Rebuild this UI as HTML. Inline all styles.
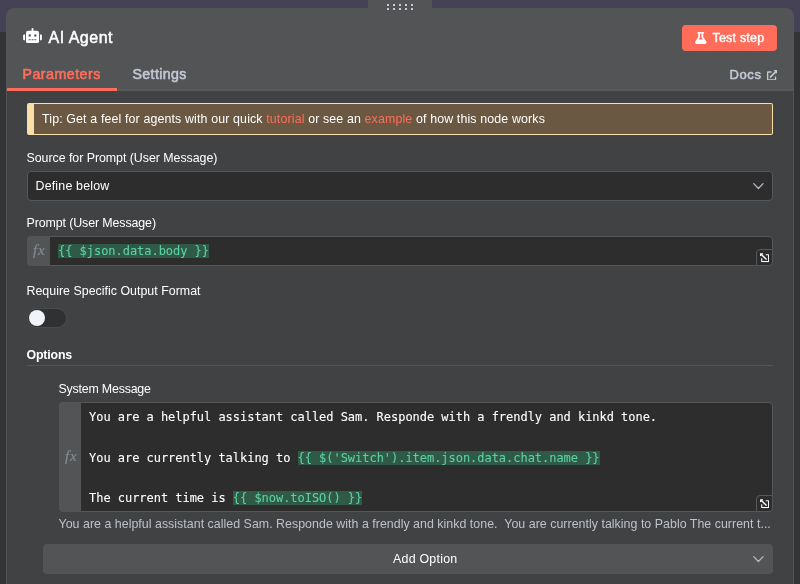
<!DOCTYPE html>
<html lang="en">
<head>
<meta charset="utf-8">
<title>AI Agent</title>
<style>
html,body{margin:0;padding:0;}
body{width:800px;height:584px;overflow:hidden;position:relative;background:#333436;font-family:"Liberation Sans",sans-serif;color:#fff;}
.abs{position:absolute;}
.topbar{left:0;top:0;width:800px;height:32px;background:#444254;}
.handle{left:368px;top:0;width:64px;height:10px;background:#535456;}
.panel{left:6px;top:8px;width:788px;height:600px;background:#535456;border-radius:8px 8px 0 0;}
.body{left:7px;top:90.600px;width:786px;height:500px;background:#414244;}
.t{position:absolute;white-space:nowrap;line-height:1;}
.title{left:48.5px;top:30px;font-size:16px;letter-spacing:0.5px;color:#fff;-webkit-text-stroke:0.5px #fff;}
.btn{left:682px;top:25px;width:95px;height:26px;background:#ff6d5a;border-radius:4px;}
.btn .t{left:30.500px;top:7px;font-size:12.4px;letter-spacing:0.25px;color:#fff;-webkit-text-stroke:0.4px #fff;}
.tab{top:67px;font-size:14.2px;}
.tab.on{left:22.500px;color:#ff6d5a;letter-spacing:0.5px;-webkit-text-stroke:0.6px #ff6d5a;}
.tab.off{color:#c3c9d5;-webkit-text-stroke:0.55px #c3c9d5;}
.underline{left:7px;top:88.200px;width:110px;height:2.600px;background:#ff6d5a;}
.tip{left:27px;top:102.600px;width:738px;height:30.400px;background:#6a5842;border:1px solid #fbdfa9;border-left-width:7px;border-radius:2px;}
.tip .t{left:8px;top:9.400px;font-size:12.4px;letter-spacing:0.136px;color:#fff;}
.tip b{font-weight:normal;color:#ff6d5a;}
.lbl{font-size:12.4px;color:#fff;}
.input{background:#2d2d2e;border:1px solid #565759;border-radius:4px;box-sizing:border-box;}
.fx{background:#535456;border-radius:4px 0 0 4px;}
.fx .t{font-family:"Liberation Serif",serif;font-style:italic;font-size:15px;letter-spacing:0.8px;color:#868a92;-webkit-text-stroke:0.2px #868a92;}
.mono{font-family:"DejaVu Sans Mono","Liberation Mono",monospace;font-size:12px;letter-spacing:-0.034px;color:#fff;-webkit-text-stroke:0.1px;}
.ex{color:#5fd0a0;background:#2f5a48;}
.hint{font-size:12.4px;letter-spacing:0.027px;color:#bcc1cb;}
</style>
</head>
<body>
<div id="root" style="position:absolute;left:0;top:0;width:800px;height:584px;overflow:hidden;will-change:transform;">
<div class="abs topbar"></div>
<div class="abs panel"></div>
<div class="abs handle"></div>
<svg class="abs" style="left:387px;top:4px" width="30" height="6" viewBox="0 0 30 6"><g fill="#c3c9d5"><rect x="0" y="0" width="2" height="2"/><rect x="6" y="0" width="2" height="2"/><rect x="12" y="0" width="2" height="2"/><rect x="18" y="0" width="2" height="2"/><rect x="24" y="0" width="2" height="2"/><rect x="0" y="4" width="2" height="2"/><rect x="6" y="4" width="2" height="2"/><rect x="12" y="4" width="2" height="2"/><rect x="18" y="4" width="2" height="2"/><rect x="24" y="4" width="2" height="2"/></g></svg>
<div class="abs body"></div>

<!-- header -->
<svg class="abs" style="left:22.800px;top:28.400px" width="19" height="15" viewBox="0 0 640 512"><path fill="#fff" d="M32 224h32v192H32a32 32 0 0 1-32-32V256a32 32 0 0 1 32-32zm512-48v272a64 64 0 0 1-64 64H160a64 64 0 0 1-64-64V176a80 80 0 0 1 80-80h112V32a32 32 0 0 1 64 0v64h112a80 80 0 0 1 80 80zm-280 80a40 40 0 1 0-40 40 40 40 0 0 0 40-40zm-8 128h-64v32h64zm96 0h-64v32h64zm104-128a40 40 0 1 0-40 40 40 40 0 0 0 40-40zm-8 128h-64v32h64zm192-128v128a32 32 0 0 1-32 32h-32V224h32a32 32 0 0 1 32 32z"/></svg>
<div class="t title">AI Agent</div>
<div class="abs btn">
  <svg class="abs" style="left:13px;top:7px" width="11.5" height="12" viewBox="0 0 448 512" preserveAspectRatio="none"><path fill="#fff" d="M437.2 403.500L320 215V64h8c13.300 0 24-10.700 24-24V24c0-13.300-10.700-24-24-24H120c-13.300 0-24 10.700-24 24v16c0 13.300 10.700 24 24 24h8v151L10.800 403.500C-18.500 450.600 15.300 512 70.900 512h306.200c55.700 0 89.400-61.500 60.100-108.500zM137.900 320l48.200-77.600c3.700-5.200 5.800-11.600 5.800-18.400V64h64v160c0 6.900 2.200 13.200 5.800 18.400l48.200 77.600h-172z"/></svg>
  <div class="t">Test step</div>
</div>
<div class="t tab on">Parameters</div>
<div class="t tab off" style="left:132.500px;letter-spacing:0.38px">Settings</div>
<div class="t tab off" style="left:729.500px;top:68px;font-size:13px;letter-spacing:0.6px">Docs</div>
<svg class="abs" style="left:766.750px;top:69.600px" width="10.5" height="10.5" viewBox="0 0 512 512"><path fill="#c3c9d5" d="M432 320H400a16 16 0 0 0-16 16V448H64V128H208a16 16 0 0 0 16-16V80a16 16 0 0 0-16-16H48A48 48 0 0 0 0 112V464a48 48 0 0 0 48 48H400a48 48 0 0 0 48-48V336A16 16 0 0 0 432 320ZM488 0h-128c-21.400 0-32 25.900-17 41l35.700 35.700L135 320.400a24 24 0 0 0 0 34L157.700 377a24 24 0 0 0 34 0L435.300 133.300 471 169c15 15 41 4.500 41-17V24A24 24 0 0 0 488 0Z"/></svg>
<div class="abs" style="left:7px;top:89.400px;width:786px;height:1.200px;background:#595a5c"></div>
<div class="abs underline"></div>

<!-- tip -->
<div class="abs tip"><div class="t">Tip: Get a feel for agents with our quick <b>tutorial</b> or see an <b>example</b> of how this node works</div></div>

<!-- source -->
<div class="t lbl" style="left:26.500px;top:152px;letter-spacing:-0.04px">Source for Prompt (User Message)</div>
<div class="abs input" style="left:27px;top:171px;width:746px;height:30px"></div>
<div class="t lbl" style="left:35.500px;top:180px;letter-spacing:0.19px">Define below</div>
<svg class="abs" style="left:752px;top:182px" width="13" height="9" viewBox="0 0 13 9"><path d="M1.700 1.600L6.400 6.500l4.700-4.900" fill="none" stroke="#b4b8c3" stroke-width="1.300" stroke-linecap="round" stroke-linejoin="round"/></svg>

<!-- prompt -->
<div class="t lbl" style="left:26.500px;top:217px;letter-spacing:-0.1px">Prompt (User Message)</div>
<div class="abs input" style="left:27px;top:236px;width:746px;height:30px"></div>
<div class="abs fx" style="left:27px;top:236px;width:23px;height:30px"><div class="t" style="left:6px;top:7px">fx</div></div>
<div class="t mono" style="left:58px;top:245px"><span class="ex">{{ $json.data.body }}</span></div>
<div class="abs" style="left:756px;top:249px;width:17px;height:17px;background:#2d2d2e;border:1px solid #565759;border-radius:4px 0 4px 0;box-sizing:border-box"></div>
<svg class="abs" style="left:760px;top:253px;transform:rotate(270deg)" width="9.2" height="9.2" viewBox="0 0 512 512"><path fill="#fff" d="M432 320H400a16 16 0 0 0-16 16V448H64V128H208a16 16 0 0 0 16-16V80a16 16 0 0 0-16-16H48A48 48 0 0 0 0 112V464a48 48 0 0 0 48 48H400a48 48 0 0 0 48-48V336A16 16 0 0 0 432 320ZM488 0h-128c-21.400 0-32 25.900-17 41l35.700 35.700L135 320.400a24 24 0 0 0 0 34L157.700 377a24 24 0 0 0 34 0L435.300 133.300 471 169c15 15 41 4.500 41-17V24A24 24 0 0 0 488 0Z"/></svg>

<!-- require -->
<div class="t lbl" style="left:26.500px;top:285px;letter-spacing:0.015px">Require Specific Output Format</div>
<div class="abs" style="left:27px;top:308px;width:39.500px;height:20px;border-radius:10px;background:#303132;border:1px solid #4b4c4e;box-sizing:border-box"></div>
<div class="abs" style="left:29px;top:310px;width:16px;height:16px;border-radius:8px;background:#f1f3fa;"></div>

<!-- options -->
<div class="t lbl" style="left:26.500px;top:349px;font-weight:bold;letter-spacing:-0.19px">Options</div>
<div class="abs" style="left:27px;top:365px;width:746px;height:1px;background:#535456"></div>

<div class="t lbl" style="left:58.500px;top:383px;letter-spacing:-0.2px">System Message</div>
<div class="abs input" style="left:59px;top:402px;width:714px;height:110px"></div>
<div class="abs fx" style="left:59px;top:402px;width:22px;height:110px"><div class="t" style="left:6px;top:47px">fx</div></div>
<div class="t mono" style="left:89px;top:411px">You are a helpful assistant called Sam. Responde with a frendly and kinkd tone.</div>
<div class="t mono" style="left:89px;top:452px">You are currently talking to <span class="ex">{{ $('Switch').item.json.data.chat.name }}</span></div>
<div class="t mono" style="left:89px;top:491.500px">The current time is <span class="ex">{{ $now.toISO() }}</span></div>
<div class="abs" style="left:756px;top:495px;width:17px;height:17px;background:#2d2d2e;border:1px solid #565759;border-radius:4px 0 4px 0;box-sizing:border-box"></div>
<svg class="abs" style="left:760px;top:499px;transform:rotate(270deg)" width="9.2" height="9.2" viewBox="0 0 512 512"><path fill="#fff" d="M432 320H400a16 16 0 0 0-16 16V448H64V128H208a16 16 0 0 0 16-16V80a16 16 0 0 0-16-16H48A48 48 0 0 0 0 112V464a48 48 0 0 0 48 48H400a48 48 0 0 0 48-48V336A16 16 0 0 0 432 320ZM488 0h-128c-21.400 0-32 25.900-17 41l35.700 35.700L135 320.400a24 24 0 0 0 0 34L157.700 377a24 24 0 0 0 34 0L435.300 133.300 471 169c15 15 41 4.500 41-17V24A24 24 0 0 0 488 0Z"/></svg>

<div class="t hint" style="left:58.500px;top:518px">You are a helpful assistant called Sam. Responde with a frendly and kinkd tone.&nbsp; You are currently talking to Pablo The current t...</div>

<div class="abs" style="left:43px;top:544px;width:730px;height:30px;background:#535456;border-radius:4px"></div>
<div class="t lbl" style="left:393px;top:553px;letter-spacing:0.24px">Add Option</div>
<svg class="abs" style="left:752px;top:555.400px" width="13" height="9" viewBox="0 0 13 9"><path d="M1.700 1.600L6.400 6.500l4.700-4.900" fill="none" stroke="#b4b8c3" stroke-width="1.300" stroke-linecap="round" stroke-linejoin="round"/></svg>
</div>
</body>
</html>
